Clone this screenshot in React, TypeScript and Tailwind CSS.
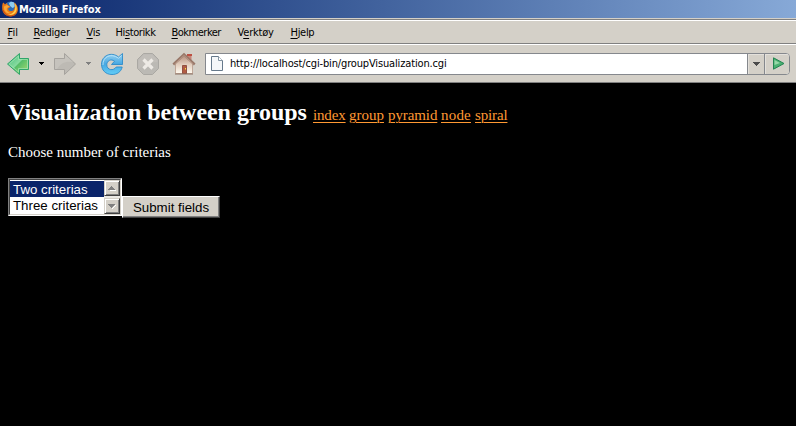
import React from "react";

const UI = "font-['DejaVu_Sans_Condensed','DejaVu_Sans',sans-serif] [font-stretch:condensed]";

const menus = [
  { pre: "", key: "F", post: "il", cell: "w-[26px]", track: "tracking-[0px]" },
  { pre: "", key: "R", post: "ediger", cell: "w-[53px]", track: "tracking-[-0.25px]" },
  { pre: "", key: "V", post: "is", cell: "w-[29px]", track: "tracking-[-0.3px]" },
  { pre: "Hi", key: "s", post: "torikk", cell: "w-[56px]", track: "tracking-[-0.4px]" },
  { pre: "", key: "B", post: "okmerker", cell: "w-[66px]", track: "tracking-[-0.5px]" },
  { pre: "V", key: "e", post: "rktøy", cell: "w-[53px]", track: "tracking-[-0.2px]" },
  { pre: "", key: "H", post: "jelp", cell: "w-[40px]", track: "tracking-[-0.3px]" },
];

const links = [
  { text: "index", w: "w-8", track: "tracking-[-0.15px]" },
  { text: "group", w: "w-[35px]", track: "tracking-[0px]" },
  { text: "pyramid", w: "w-[49px]", track: "tracking-[-0.1px]" },
  { text: "node", w: "w-[30px]", track: "tracking-[0.2px]" },
  { text: "spiral", w: "w-8", track: "tracking-[-0.15px]" },
];

function FirefoxLogo() {
  return (
    <svg width="16" height="16" viewBox="0 0 16 16" className="shrink-0">
      <circle cx="8.5" cy="7" r="6.5" fill="#2b6cb8" />
      <path d="M7 2.5C8 0 12 .5 13 3L12.5 6 10.5 7 8 5Z" fill="#8fcdf0" />
      <path d="M.6 2.5L1.5 1.5 3 3.5 5 2 5.5 4 8.5 5.5 7 7 6 7.5C6 10.5 10.5 11 12 8.5L13 5 12 1.5C17 4.5 17 11 13 14C9 17 2.5 15 .8 10.5C0 8 0 5 .6 2.5Z" fill="#e87717" />
      <path d="M2 5.5L5 4 7.5 5.5 5 7C4 9 6 11.8 9 11.8C6 13.5 2 11 2 7Z" fill="#f8a838" />
      <path d="M13 2.5C15.5 5.5 15.5 10.5 12 13C10 14.3 7 14 6 13.5C12 13 14 9 13 2.5Z" fill="#ffcf4a" />
      <path d="M1 9C3 15 9 16.5 13 13.5" fill="none" stroke="#bd4313" strokeWidth=".9" />
    </svg>
  );
}

function BackArrow() {
  return (
    <svg width="24" height="24" viewBox="0 0 24 24" className="shrink-0">
      <defs>
        <linearGradient id="back" x1="0" y1="0" x2="1" y2="1">
          <stop offset=".2" stopColor="#5bc987" />
          <stop offset=".48" stopColor="#86d99f" />
          <stop offset=".52" stopColor="#55bd68" />
          <stop offset="1" stopColor="#b4df72" />
        </linearGradient>
      </defs>
      <path d="M1.5 12L13.5 1.5V6.5H22.5V17.5H13.5V22.5Z" fill="url(#back)" stroke="#31a56a" />
      <path d="M3.2 12L12.5 4V7.5H21.5V16.5H12.5V20Z" fill="none" stroke="#a5e5b5" strokeWidth=".7" />
    </svg>
  );
}

function ForwardArrow() {
  return (
    <svg width="24" height="24" viewBox="0 0 24 24" className="shrink-0">
      <path d="M22.5 12L11.5 1.5V6.5H1.5V17.5H11.5V22.5Z" fill="#bdbab4" stroke="#a6a39e" />
      <path d="M2 7H12V3L20 10C12 9 8 11 4 17H2Z" fill="#c6c3bd" />
    </svg>
  );
}

function ReloadIcon() {
  return (
    <svg width="24" height="24" viewBox="0 0 24 24" className="shrink-0">
      <defs>
        <linearGradient id="reload" x1="0" y1="0" x2="0" y2="1">
          <stop offset="0" stopColor="#9bd3f1" />
          <stop offset=".5" stopColor="#47a8e2" />
          <stop offset="1" stopColor="#63cdf6" />
        </linearGradient>
      </defs>
      <path d="M22.5 1.5V12.5H11.5L14.5 9.2C11 6.3 6.8 9 6.8 12.7C6.8 18.2 13.5 19.3 16.2 15H22.2C21 20 17 22.5 12 22.5C5.5 22.5 1.5 18 1.5 12.3C1.5 3.5 11.5-.8 18.5 5Z" fill="url(#reload)" stroke="#2e8bc9" strokeWidth=".9" />
      <path d="M3 13C2.4 5 11 .5 18.5 6.2L21.5 3.5" fill="none" stroke="#c4e8f9" strokeWidth=".8" />
    </svg>
  );
}

function StopIcon() {
  return (
    <svg width="24" height="24" viewBox="0 0 24 24" className="shrink-0">
      <path d="M7.5 1.5H16.5L22.5 7.5V16.5L16.5 22.5H7.5L1.5 16.5V7.5Z" fill="#bbb9b4" stroke="#aaa8a3" />
      <path d="M8 2.5H16L21.5 8V10C14 10 8 13 2.5 17V8Z" fill="#c1beb9" />
      <path d="M7.5 7.5L16.5 16.5M16.5 7.5L7.5 16.5" stroke="#edeae5" strokeWidth="3.2" />
    </svg>
  );
}

function HomeIcon() {
  return (
    <svg width="24" height="24" viewBox="0 0 24 24" className="shrink-0">
      <defs>
        <linearGradient id="wall" x1="0" y1="0" x2="0" y2="1">
          <stop offset="0" stopColor="#b28b78" />
          <stop offset=".5" stopColor="#e2cdbd" />
          <stop offset="1" stopColor="#fffaf0" />
        </linearGradient>
      </defs>
      <path d="M15.5 2.5H19.5V9H15.5Z" fill="#c98578" />
      <path d="M15 2H20V4H15Z" fill="#bd5042" />
      <path d="M3.5 11L12 3L20.5 11V21.5H3.5Z" fill="url(#wall)" stroke="#b69989" strokeWidth=".8" />
      <path d="M1.3 12.5L12 2.5L22.7 12.5" fill="none" stroke="#997869" strokeWidth="2.4" />
      <path d="M2.5 12.2L12 3.5L21.5 12.2" fill="none" stroke="#c7a796" strokeWidth=".7" />
      <path d="M10.5 13.5H14.5V21.5H10.5Z" fill="#b25c44" stroke="#8b4739" strokeWidth=".9" />
      <path d="M13 16H14V17.5H13Z" fill="#ffdf3c" />
      <path d="M3 22H21" stroke="#8a7165" />
    </svg>
  );
}

function Caret({ color }: { color: string }) {
  return (
    <svg width="5" height="3" viewBox="0 0 5 3" shapeRendering="crispEdges" className="shrink-0">
      <path d="M0 0H5V1H4V2H3V3H2V2H1V1H0Z" fill={color} />
    </svg>
  );
}

function PageIcon() {
  return (
    <svg width="12" height="15" viewBox="0 0 12 15" className="shrink-0">
      <path d="M.5.5H7.5L11.5 4.5V14.5H.5Z" fill="#f5f7f9" stroke="#66798b" />
      <path d="M7.5.5V4.5H11.5" fill="#fff" stroke="#8394a2" />
    </svg>
  );
}

function ScrollButton({ up }: { up?: boolean }) {
  return (
    <div className="flex h-4 w-4 items-center justify-center border border-t-[#d4d0c8] border-l-[#d4d0c8] border-r-[#404040] border-b-[#404040] bg-[#d4d0c8] shadow-[inset_1px_1px_#fff,inset_-1px_-1px_#808080]">
      <svg width="8" height="5" viewBox="0 0 8 5" shapeRendering="crispEdges">
        {up ? (
          <>
            <path d="M1 5H8V4H5V3Z" fill="#fff" />
            <path d="M3 0H4V1H5V2H6V3H7V4H0V3H1V2H2V1H3Z" fill="#808080" />
          </>
        ) : (
          <>
            <path d="M4 5V4H5V3H6V2H7V1H8V2H7V3H6V4H5V5Z" fill="#fff" />
            <path d="M0 0H7V1H6V2H5V3H4V4H3V3H2V2H1V1H0Z" fill="#808080" />
          </>
        )}
      </svg>
    </div>
  );
}

export default function App() {
  return (
    <div className="flex h-[426px] w-[796px] flex-col overflow-hidden bg-black">
      <header className={`${UI} shrink-0 text-[11px] text-black`}>
        <div className="flex h-[18px] items-center bg-linear-to-r from-[#0a246a] to-[#87a9d7] pl-[2px] text-white">
          <FirefoxLogo />
          <span className="ml-px pt-px text-[11px] leading-[17px] font-bold whitespace-nowrap">Mozilla Firefox</span>
        </div>
        <div className="h-px bg-[#d4d0c8]" />
        <nav className="flex h-[25px] items-center border-t border-b border-t-[#808080] border-b-[#808080] bg-[#d4d0c8] pl-[7.5px] shadow-[inset_0_1px_#fff]">
          {menus.map((m) => (
            <span key={m.post} className={`${m.cell} ${m.track} pt-[2px] leading-[14px] whitespace-nowrap`}>
              {m.pre}
              <span className="underline underline-offset-[2px] decoration-1">{m.key}</span>
              {m.post}
            </span>
          ))}
        </nav>
        <div className="flex h-[39px] items-center border-t border-b border-t-white border-b-[#808080] bg-[#d4d0c8] pl-[6px]">
          <BackArrow />
          <div className="flex w-[17px] justify-center pl-[5px]"><Caret color="#000" /></div>
          <div className="ml-[6px] flex"><ForwardArrow /></div>
          <div className="flex w-[17px] justify-center pl-[5px]"><Caret color="#808080" /></div>
          <div className="ml-[6px] flex"><ReloadIcon /></div>
          <div className="ml-3 flex"><StopIcon /></div>
          <div className="ml-3 flex"><HomeIcon /></div>
          <div className="ml-[9px] flex h-[22px] w-[585px] overflow-hidden rounded-r-[4px] border border-[#85888d] bg-white">
            <div className="flex flex-1 items-center pl-[5px]">
              <PageIcon />
              <span className="ml-[7px] text-[11px] leading-5 tracking-[-0.15px] whitespace-nowrap">http://localhost/cgi-bin/groupVisualization.cgi</span>
            </div>
            <div className="flex w-[17px] items-center justify-center border-l border-[#85888d] bg-[#d4d0c8] shadow-[inset_1px_1px_#e4e1dc]">
              <svg width="7" height="4" viewBox="0 0 7 4" shapeRendering="crispEdges"><path d="M0 0H7V1H6V2H5V3H4V4H3V3H2V2H1V1H0Z" fill="#4b4b4b" /></svg>
            </div>
            <div className="flex w-[25px] items-center justify-center border-l border-[#85888d] bg-[#d4d0c8] pl-[3px] shadow-[inset_1px_1px_#e4e1dc]">
              <svg width="12" height="13" viewBox="0 0 12 13">
                <path d="M.5.8L11 6.5L.5 12.2Z" fill="#4bb172" stroke="#238451" />
                <path d="M1.5 3L7 6 1.5 8Z" fill="#98d8a8" />
              </svg>
            </div>
          </div>
        </div>
      </header>

      <main className="flex flex-col items-start pl-2 font-['Liberation_Serif',serif] text-[#fff]">
        <div className="mt-[16px] flex h-[27px] items-baseline whitespace-nowrap leading-[27px]">
          <h2 className="w-[305px] text-[24px] font-bold tracking-[-0.04px]">Visualization between groups</h2>
          <div className="flex gap-1 text-[15px] text-[#ff9933]">
            {links.map((l) => (
              <a key={l.text} className={`${l.w} ${l.track} cursor-pointer underline decoration-1 underline-offset-[2px]`}>{l.text}</a>
            ))}
          </div>
        </div>
        <p className="mt-[17px] text-[15px] leading-[19px] whitespace-nowrap">Choose number of criterias</p>
        <form className="mt-4 flex items-start font-['Liberation_Sans',sans-serif] text-[13.3px] text-black">
          <div className="flex h-[38px] w-[114px] border border-t-[#808080] border-l-[#808080] border-r-white border-b-white bg-white">
            <div className="flex flex-1 border border-t-[#404040] border-l-[#404040] border-r-[#d4d0c8] border-b-[#d4d0c8]">
              <div className="flex-1 pt-px whitespace-nowrap">
                <div className="h-4 bg-[#0a246a] pt-px pl-[3px] leading-4 text-white">Two criterias</div>
                <div className="h-4 pt-px pl-[3px] leading-4">Three criterias</div>
              </div>
              <div className="flex w-4 flex-col justify-between bg-[#eae8e4]">
                <ScrollButton up />
                <ScrollButton />
              </div>
            </div>
          </div>
          <button type="button" className="mt-[18px] h-[22px] w-[98px] border border-t-white border-l-white border-r-[#404040] border-b-[#404040] bg-[#d4d0c8] pt-px text-center leading-[19px] whitespace-nowrap shadow-[inset_-1px_-1px_#808080]">
            Submit fields
          </button>
        </form>
      </main>
    </div>
  );
}
